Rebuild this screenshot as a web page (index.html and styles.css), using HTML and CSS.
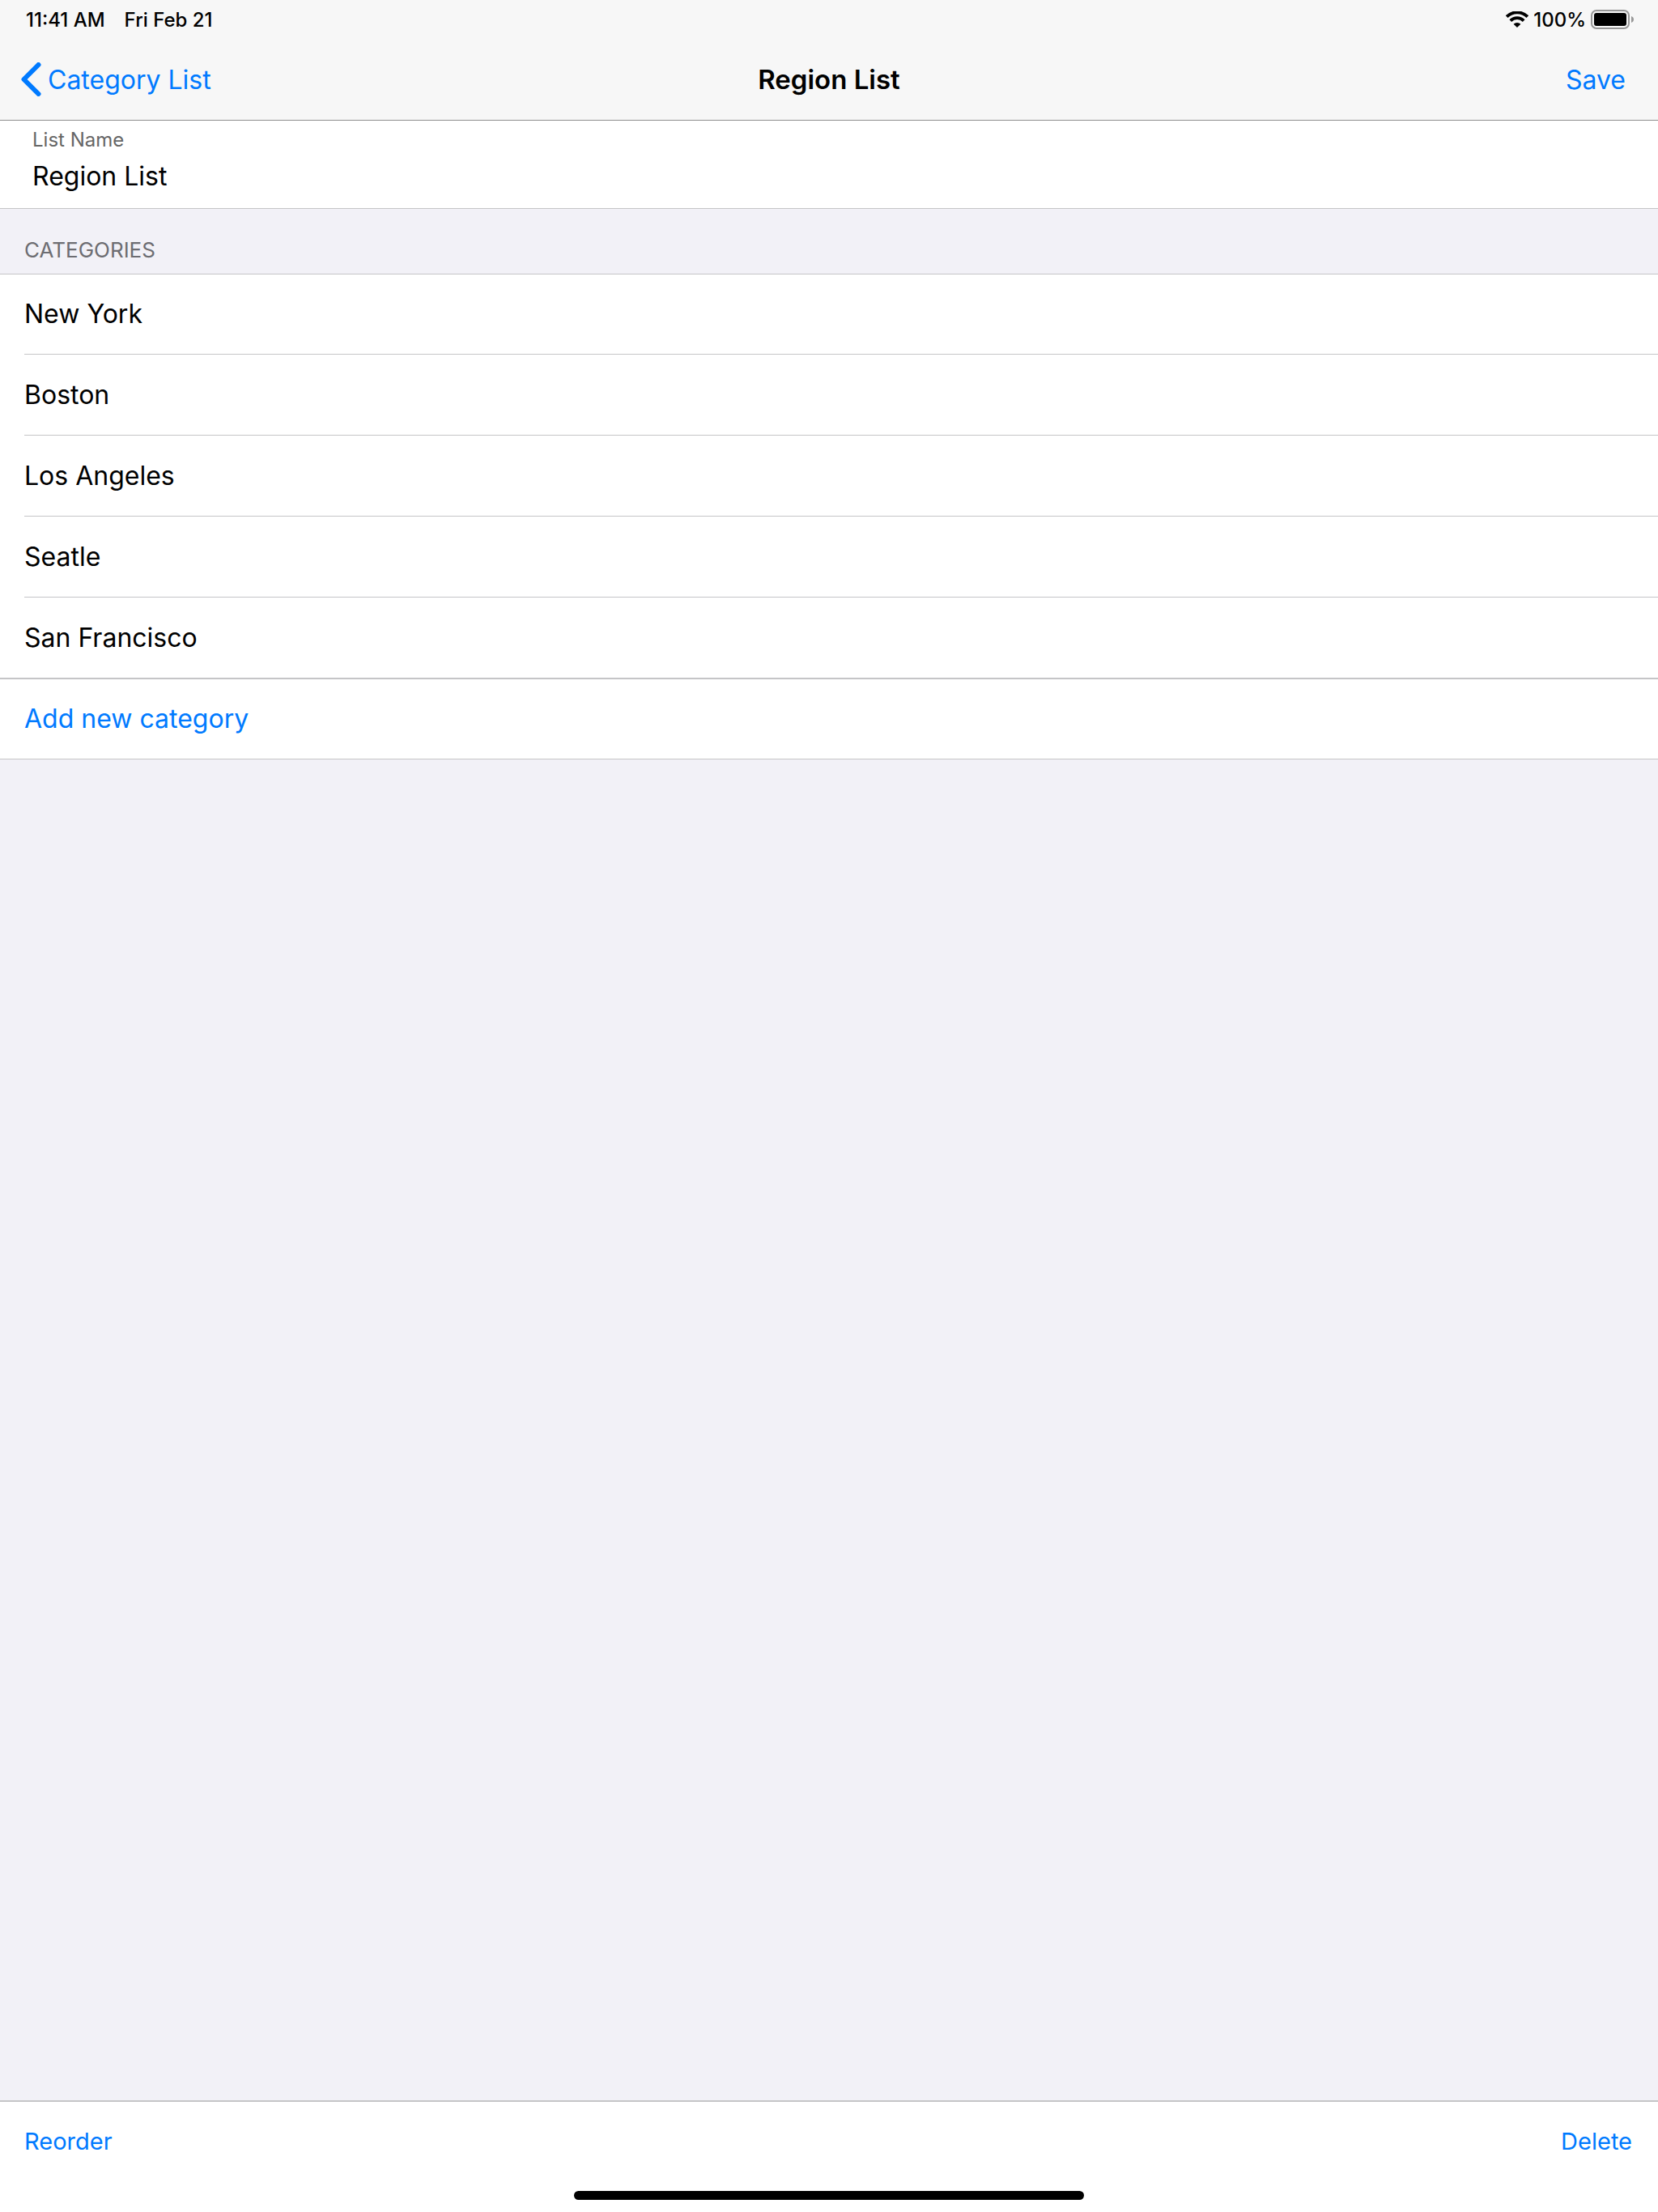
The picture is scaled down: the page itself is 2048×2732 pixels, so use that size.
FILE: index.html
```html
<!DOCTYPE html>
<html lang="en">
<head>
<meta charset="utf-8">
<title>Region List</title>
<meta name="viewport" content="width=device-width, initial-scale=1">
<link rel="stylesheet" href="styles.css">
</head>
<body>
<div class="app">
  <header class="top">
    <div class="status">
      <div class="status-group status-left">
        <span>11:41 AM</span>
        <span>Fri Feb 21</span>
      </div>
      <div class="status-group status-right">
        <svg class="wifi" viewBox="0 0 28 20" width="28" height="20" aria-hidden="true">
          <path d="M1.2 6.600a18 18 0 0 1 25.600 0" fill="none" stroke="#000" stroke-width="3.800"/>
          <path d="M5.800 11.600a11.600 11.600 0 0 1 16.400 0" fill="none" stroke="#000" stroke-width="3.800"/>
          <path d="M9.600 15.800a6.300 6.300 0 0 1 8.800 0L14 20z" fill="#000"/>
        </svg>
        <span>100%</span>
        <svg class="battery" viewBox="0 0 53 24" width="53" height="24" aria-hidden="true">
          <rect x="1" y="1" width="46" height="22" rx="6" fill="none" stroke="#979797" stroke-width="2"/>
          <rect x="4" y="4" width="40" height="16" rx="3" fill="#000"/>
          <path d="M50 8c4 1.200 4 6.800 0 8z" fill="#979797"/>
        </svg>
      </div>
    </div>
    <nav class="nav">
      <a class="back" href="#">
        <svg viewBox="0 0 25 42" width="25" height="42" aria-hidden="true">
          <path d="M21.500 3 3.500 21 21.500 39" fill="none" stroke="#007aff" stroke-width="6" stroke-linecap="round" stroke-linejoin="round"/>
        </svg>
        <span>Category List</span>
      </a>
      <h1 class="title">Region List</h1>
      <button class="action save" type="button">Save</button>
    </nav>
  </header>

  <main class="content">
    <div class="field">
      <label for="list-name">List Name</label>
      <input id="list-name" type="text" value="Region List">
    </div>
    <h2 class="section-title">CATEGORIES</h2>
    <ul class="rows">
      <li>New York</li>
      <li>Boston</li>
      <li>Los Angeles</li>
      <li>Seatle</li>
      <li>San Francisco</li>
    </ul>
    <button class="action add" type="button">Add new category</button>
  </main>

  <footer class="bottom">
    <div class="toolbar">
      <button class="action" type="button">Reorder</button>
      <button class="action" type="button">Delete</button>
    </div>
    <div class="home-indicator"></div>
  </footer>
</div>
</body>
</html>
```
FILE: styles.css
```css
* {
  box-sizing: border-box;
}

body {
  margin: 0;
  font-family: Inter, "Liberation Sans", sans-serif;
  font-size: 32px;
  color: #000;
  background: #f2f1f7;
}

.app {
  display: flex;
  flex-direction: column;
  min-height: 100vh;
}

.top {
  background: #f7f7f7;
  border-bottom: 1px solid #8e8e8e;
}

.status {
  display: flex;
  justify-content: space-between;
  align-items: center;
  height: 48px;
  padding: 0 30px 0 32px;
  font-size: 24px;
  font-weight: 500;
}

.status-group {
  display: flex;
  align-items: center;
}

.status-left {
  gap: 24px;
}

.status-right {
  gap: 6px;
}

.nav {
  display: grid;
  grid-template-columns: 1fr auto 1fr;
  align-items: center;
  height: 100px;
  padding: 0 40px 0 26px;
}

.back {
  display: flex;
  align-items: center;
  gap: 8px;
  color: #007aff;
  text-decoration: none;
}

.title {
  margin: 0 0 0 14px;
  font-size: 33px;
  font-weight: 600;
}

.action {
  padding: 0;
  border: 0;
  background: none;
  font: inherit;
  color: #007aff;
  cursor: pointer;
}

.save {
  justify-self: end;
}

.content {
  flex: 1;
}

.field {
  display: flex;
  flex-direction: column;
  padding: 0 40px 20px;
  background: #fff;
  border-bottom: 1px solid #c5c5c7;
}

.field label {
  font-size: 24px;
  line-height: 48px;
  color: #666;
}

.field input {
  height: 40px;
  padding: 0;
  border: 0;
  outline: 0;
  background: none;
  font: inherit;
  color: inherit;
}

.section-title {
  margin: 0;
  padding: 36px 30px 14px;
  font-size: 26px;
  font-weight: 400;
  line-height: 30px;
  color: #6d6d72;
  border-bottom: 1px solid #c5c5c7;
}

.rows {
  margin: 0;
  padding: 0 0 0 30px;
  list-style: none;
  background: #fff;
  border-bottom: 2px solid #c5c5c7;
}

.rows li {
  line-height: 98px;
}

.rows li + li {
  padding-top: 1px;
  border-top: 1px solid #c5c5c7;
}

.add {
  display: block;
  width: 100%;
  padding: 0 30px;
  line-height: 98px;
  text-align: left;
  background: #fff;
  border-bottom: 1px solid #c5c5c7;
}

.bottom {
  padding-bottom: 15px;
  background: #fff;
  border-top: 2px solid #c5c5c7;
}

.toolbar {
  display: flex;
  justify-content: space-between;
  align-items: center;
  height: 96px;
  padding: 0 32px 0 30px;
  font-size: 29px;
}

.home-indicator {
  width: 31%;
  max-width: 630px;
  height: 11px;
  margin: 14px auto 0;
  border-radius: 6px;
  background: #000;
}
```
